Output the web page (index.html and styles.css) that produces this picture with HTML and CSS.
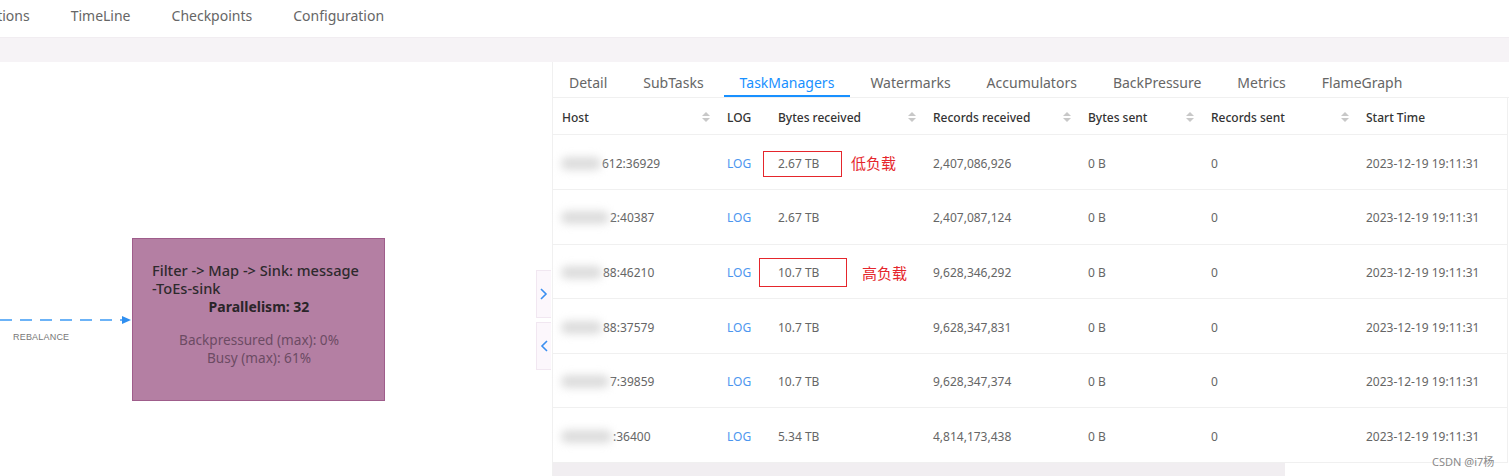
FILE: index.html
```html
<!DOCTYPE html>
<html>
<head>
<meta charset="utf-8">
<link rel="stylesheet" href="styles.css">
</head>
<body>
<div class="page">
  <nav class="topnav">
    <span class="nav-item first">Exceptions</span>
    <span class="nav-item">TimeLine</span>
    <span class="nav-item">Checkpoints</span>
    <span class="nav-item">Configuration</span>
  </nav>
  <div class="band"></div>
  <div class="main">
    <section class="canvas">
      <svg class="edge" width="134" height="14" viewBox="0 0 134 14">
        <line x1="0" y1="7" x2="124" y2="7" stroke="#3c9bf5" stroke-width="1.3" stroke-dasharray="12,8"/>
        <path d="M122 3 L131 7 L122 11 Z" fill="#2f8ff0"/>
      </svg>
      <span class="edge-label">REBALANCE</span>
      <div class="node">
        <div class="node-desc">Filter -&gt; Map -&gt; Sink: message<br>-ToEs-sink</div>
        <div class="node-par">Parallelism: 32</div>
        <div class="node-stat">Backpressured (max): 0%<br>Busy (max): 61%</div>
      </div>
      <button class="toggle t-open"><svg width="10" height="14" viewBox="0 0 10 14"><path d="M2 2 L7 7 L2 12" fill="none" stroke="#3b8ff0" stroke-width="1.6"/></svg></button>
      <button class="toggle t-close"><svg width="10" height="14" viewBox="0 0 10 14"><path d="M8 2 L3 7 L8 12" fill="none" stroke="#3b8ff0" stroke-width="1.6"/></svg></button>
    </section>
    <section class="panel">
      <div class="tabs">
        <span class="tab">Detail</span>
        <span class="tab">SubTasks</span>
        <span class="tab active">TaskManagers</span>
        <span class="tab">Watermarks</span>
        <span class="tab">Accumulators</span>
        <span class="tab">BackPressure</span>
        <span class="tab">Metrics</span>
        <span class="tab">FlameGraph</span>
      </div>
      <div class="table">
        <div class="row head">
          <div class="cell c-host">Host<i class="sorter"></i></div>
          <div class="cell c-log">LOG</div>
          <div class="cell c-br">Bytes received<i class="sorter"></i></div>
          <div class="cell c-rr">Records received<i class="sorter"></i></div>
          <div class="cell c-bs">Bytes sent<i class="sorter"></i></div>
          <div class="cell c-rs">Records sent<i class="sorter"></i></div>
          <div class="cell c-st">Start Time</div>
        </div>
        <div class="row">
          <div class="cell c-host"><span class="blur w42"></span>612:36929</div>
          <div class="cell c-log link">LOG</div>
          <div class="cell c-br">2.67 TB</div>
          <div class="cell c-rr">2,407,086,926</div>
          <div class="cell c-bs">0 B</div>
          <div class="cell c-rs">0</div>
          <div class="cell c-st">2023-12-19 19:11:31</div>
        </div>
        <div class="row">
          <div class="cell c-host"><span class="blur w50"></span>2:40387</div>
          <div class="cell c-log link">LOG</div>
          <div class="cell c-br">2.67 TB</div>
          <div class="cell c-rr">2,407,087,124</div>
          <div class="cell c-bs">0 B</div>
          <div class="cell c-rs">0</div>
          <div class="cell c-st">2023-12-19 19:11:31</div>
        </div>
        <div class="row">
          <div class="cell c-host"><span class="blur w43"></span>88:46210</div>
          <div class="cell c-log link">LOG</div>
          <div class="cell c-br">10.7 TB</div>
          <div class="cell c-rr">9,628,346,292</div>
          <div class="cell c-bs">0 B</div>
          <div class="cell c-rs">0</div>
          <div class="cell c-st">2023-12-19 19:11:31</div>
        </div>
        <div class="row">
          <div class="cell c-host"><span class="blur w43"></span>88:37579</div>
          <div class="cell c-log link">LOG</div>
          <div class="cell c-br">10.7 TB</div>
          <div class="cell c-rr">9,628,347,831</div>
          <div class="cell c-bs">0 B</div>
          <div class="cell c-rs">0</div>
          <div class="cell c-st">2023-12-19 19:11:31</div>
        </div>
        <div class="row">
          <div class="cell c-host"><span class="blur w50"></span>7:39859</div>
          <div class="cell c-log link">LOG</div>
          <div class="cell c-br">10.7 TB</div>
          <div class="cell c-rr">9,628,347,374</div>
          <div class="cell c-bs">0 B</div>
          <div class="cell c-rs">0</div>
          <div class="cell c-st">2023-12-19 19:11:31</div>
        </div>
        <div class="row">
          <div class="cell c-host"><span class="blur w53"></span>:36400</div>
          <div class="cell c-log link">LOG</div>
          <div class="cell c-br">5.34 TB</div>
          <div class="cell c-rr">4,814,173,438</div>
          <div class="cell c-bs">0 B</div>
          <div class="cell c-rs">0</div>
          <div class="cell c-st">2023-12-19 19:11:31</div>
        </div>
      </div>
      <div class="scrollbar"><div class="thumb"></div></div>
    </section>
  </div>
  <div class="mark box1"></div>
  <div class="mark box2"></div>
  <span class="note note1">低负载</span>
  <span class="note note2">高负载</span>
  <span class="watermark">CSDN @i7杨</span>
</div>
</body>
</html>
```
FILE: styles.css
```css
* { box-sizing: border-box; }
html, body { margin: 0; padding: 0; background: #fff; }
body {
  font-family: "Noto Sans", "Noto Sans CJK SC", sans-serif;
  color: #595959;
  overflow: hidden;
}
.page { position: relative; width: 1509px; height: 476px; overflow: hidden; }

.topnav {
  display: flex;
  gap: 41px;
  height: 37px;
  align-items: center;
  font-size: 14px;
  color: #666;
  padding-bottom: 6px;
}
.nav-item.first { margin-left: -41px; }

.band { height: 25px; background: #f6f3f6; border-top: 1px solid #f1edf1; }

.main { display: flex; height: 414px; }

.canvas { position: relative; width: 552px; flex: none; }
.edge { position: absolute; left: 0; top: 251px; }
.edge-label {
  position: absolute; left: 13px; top: 270px;
  font-family: "Liberation Sans", sans-serif;
  font-size: 9px; color: #777; letter-spacing: 0.2px;
}
.node {
  position: absolute; left: 132px; top: 176px;
  width: 253px; height: 163px;
  background: #b47fa3;
  border: 1px solid #9f5d8b;
  padding: 22px 2px 0 19px;
  text-align: center;
}
.node-desc {
  text-align: left;
  font-size: 14.6px; line-height: 18px; font-weight: 500;
  color: #2e2a2d;
  white-space: nowrap;
}
.node-par { font-size: 14px; line-height: 20px; font-weight: 700; color: #2a2529; padding-right: 16px; }
.node-stat { margin-top: 14px; font-size: 13.6px; line-height: 18px; color: #6c4b63; padding-right: 16px; }

.toggle {
  position: absolute; right: 1px; width: 15px; height: 48px;
  background: #fcf7fc; border: 1px solid #f1e7f1; border-right: none;
  padding: 0; display: flex; align-items: center; justify-content: center;
}
.t-open { top: 208px; }
.t-close { top: 260px; }

.panel { flex: 1; border-left: 1px solid #f0f0f0; display: flex; flex-direction: column; position: relative; }

.tabs {
  display: flex; gap: 4px; height: 38px;
  border-bottom: 1px solid #f0f0f0;
  font-size: 14px;
}
.tab { padding: 5px 16px 0; display: flex; align-items: center; color: #666; }
.tab.active { color: #1890ff; border-bottom: 2px solid #1890ff; padding-top: 7px; }

.table { width: 955px; border-right: 1px solid #f0f0f0; font-size: 12px; }
.row {
  display: grid;
  grid-template-columns: 165px 51px 155px 155px 123px 155px 151px;
  height: 54.6px;
  align-items: center;
  border-bottom: 1px solid #f0f0f0;
  padding-top: 2px;
}
.row.head { height: 37px; padding-top: 3px; }
.cell { padding-left: 9px; position: relative; white-space: nowrap; color: #666; display: flex; align-items: center; }
.head .cell { color: #333; font-weight: 500; }
.link { color: #4d96ef; }

.sorter {
  position: absolute; right: 8px; top: 50%; margin-top: -7px;
  width: 8px; height: 12px;
}
.sorter::before, .sorter::after {
  content: ""; position: absolute; left: 0;
  border-left: 4px solid transparent; border-right: 4px solid transparent;
}
.sorter::before { top: 1px; border-bottom: 4px solid #c8c8c8; }
.sorter::after { bottom: 1px; border-top: 4px solid #c8c8c8; }

.blur {
  display: inline-block; height: 13px; margin-left: -1px; margin-right: 1px;
  background: #dcdcdc; filter: blur(4px); border-radius: 6px;
}
.w42 { width: 40px; }
.w43 { width: 41px; }
.w50 { width: 48px; }
.w53 { width: 51px; }

.scrollbar { margin-top: auto; height: 13px; }
.thumb { width: 732px; height: 13px; background: #f1eef1; }

.mark { position: absolute; border: 1px solid #e5262c; }
.box1 { left: 763px; top: 151px; width: 79px; height: 26px; }
.box2 { left: 759px; top: 258px; width: 88px; height: 29px; }
.note {
  position: absolute; color: #e5262c; font-size: 15px;
  font-family: "Noto Sans CJK SC", sans-serif; line-height: 20px;
}
.note1 { left: 851px; top: 153px; }
.note2 { left: 862px; top: 263px; }
.watermark {
  position: absolute; left: 1432px; top: 455px;
  font-family: "Noto Sans", "Noto Sans CJK SC", sans-serif;
  font-size: 11px; color: #8a8a8a; line-height: 14px;
}
```
